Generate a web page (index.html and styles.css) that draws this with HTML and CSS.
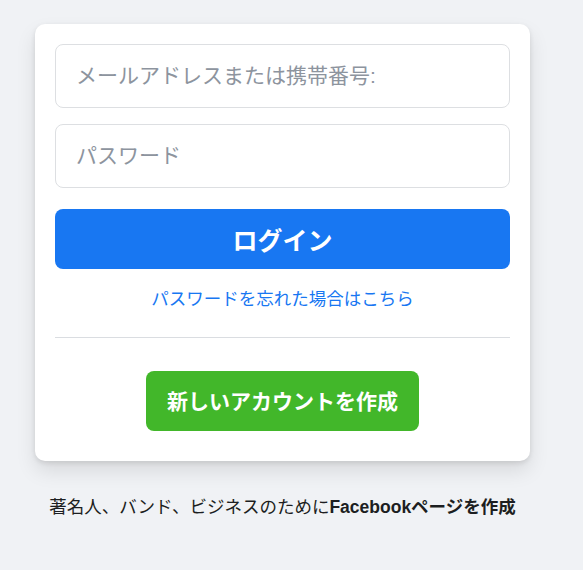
FILE: index.html
```html
<!DOCTYPE html>
<html lang="ja">
<head>
<meta charset="utf-8">
<link rel="stylesheet" href="styles.css">
</head>
<body>
<div class="wrap">
  <form class="card">
    <input class="field" type="text" placeholder="メールアドレスまたは携帯番号:">
    <input class="field field-pw" type="password" placeholder="パスワード">
    <button class="login" type="button">ログイン</button>
    <div class="forgot"><a href="#">パスワードを忘れた場合はこちら</a></div>
    <div class="divider"></div>
    <div class="create-row"><button class="create" type="button">新しいアカウントを作成</button></div>
  </form>
  <p class="footer">著名人、バンド、ビジネスのために<b>Facebookページを作成</b></p>
</div>
</body>
</html>
```

FILE: styles.css
```css
html, body {
  margin: 0;
  padding: 0;
  background: #f0f2f5;
  font-family: "Liberation Sans", "Noto Sans CJK JP", sans-serif;
}
.wrap {
  width: 495px;
  margin-left: 35px;
  padding-top: 24px;
}
.card {
  display: flex;
  flex-direction: column;
  background: #fff;
  border-radius: 10px;
  box-shadow: 0 2px 5px rgba(0,0,0,.1), 0 10px 20px rgba(0,0,0,.1);
  padding: 20px 20px 30px;
  box-sizing: border-box;
}
.field {
  height: 64px;
  box-sizing: border-box;
  border: 1px solid #dddfe2;
  border-radius: 8px;
  padding: 0 20px;
  font-size: 21px;
  color: #1c1e21;
  font-family: inherit;
  outline: none;
}
.field::placeholder { color: #8d949e; }
.field-pw { margin-top: 16px; }
.login {
  margin-top: 21px;
  height: 60px;
  border: none;
  border-radius: 8px;
  background: #1877f2;
  color: #fff;
  font-size: 25px;
  font-weight: bold;
  font-family: inherit;
}
.forgot {
  margin-top: 19px;
  text-align: center;
  font-size: 17.5px;
  line-height: 22px;
}
.forgot a { color: #1877f2; text-decoration: none; }
.divider {
  margin-top: 27px;
  border-bottom: 1px solid #dadde1;
}
.create-row {
  display: flex;
  justify-content: center;
  margin-top: 33px;
}
.create {
  height: 60px;
  width: 273px;
  border: none;
  border-radius: 8px;
  background: #42b72a;
  color: #fff;
  font-size: 21px;
  font-weight: bold;
  font-family: inherit;
  padding-bottom: 4px;
}
.footer {
  margin: 35px 0 0;
  text-align: center;
  font-size: 17.5px;
  line-height: 22px;
  color: #1c1e21;
}
.footer b { font-weight: bold; }
```
